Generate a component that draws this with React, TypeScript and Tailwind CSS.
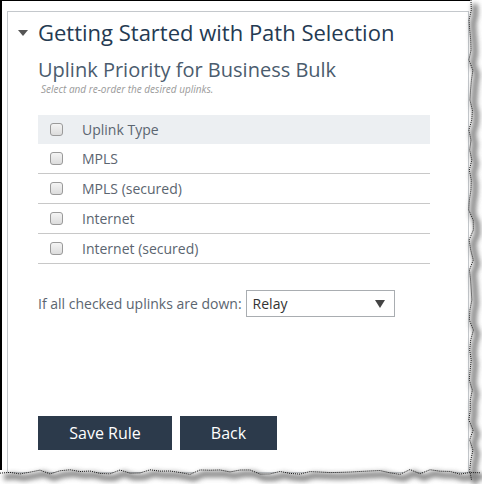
import { useState } from "react"

const uplinks = ["MPLS", "MPLS (secured)", "Internet", "Internet (secured)"]

function jagged(seedStart: number, count: number, step: number, amp: number) {
  // deterministic pseudo-random offsets for the torn paper edge
  const pts: number[] = []
  let s = seedStart
  for (let i = 0; i <= count; i++) {
    s = (s * 9301 + 49297) % 233280
    pts.push((s / 233280) * amp - amp / 2)
  }
  return pts.map((o, i) => [i * step, o] as const)
}

function TornEdges() {
  const right = jagged(7, 48, 10, 5)
  const bottom = jagged(13, 48, 10, 5)
  const rightPath = "M" + right.map(([y, o]) => `${471 + o} ${y}`).join(" L")
  const bottomPath = "M" + bottom.map(([x, o]) => `${x} ${472 + o}`).join(" L")
  const shift = (p: string) => p.replace(/(-?\d+\.?\d*) (-?\d+\.?\d*)/g, (_, a, b) => `${+a + 4} ${+b + 4}`)
  return (
    <svg className="pointer-events-none absolute inset-0" width="482" height="484" aria-hidden="true">
      <defs>
        <filter id="blur" x="-20%" y="-20%" width="140%" height="140%">
          <feGaussianBlur stdDeviation="2.5" />
        </filter>
      </defs>
      <path d={`${rightPath} L482 484 L482 0 Z`} fill="#ffffff" />
      <path d={`${bottomPath} L482 484 L0 484 Z`} fill="#ffffff" />
      <g filter="url(#blur)" opacity="0.8">
        <path d={shift(rightPath)} stroke="#666" strokeWidth="6" fill="none" />
        <path d={shift(bottomPath)} stroke="#666" strokeWidth="6" fill="none" />
      </g>
      <path d={rightPath} stroke="#111" strokeWidth="1" strokeDasharray="1 1" fill="none" />
      <path d={bottomPath} stroke="#111" strokeWidth="1" strokeDasharray="1 1" fill="none" />
    </svg>
  )
}

function Box() {
  return <span className="inline-block h-[13px] w-[13px] rounded-[3px] border border-[#9a9a9a] bg-gradient-to-b from-[#f4f4f4] to-[#dcdcdc]" />
}

export default function App() {
  const [relay] = useState("Relay")
  return (
    <div className="relative h-[484px] w-[482px] overflow-hidden bg-white font-['Open_Sans',sans-serif]">
      <div className="absolute left-0 top-0 h-[470px] w-[470px] border-l-2 border-t border-black" />
      <div className="absolute left-[7px] top-[11px] h-[462px] w-[462px] border border-[#c4c8cc]" />
      <div className="relative flex flex-col pl-[38px] pt-[17px]">
        <div className="relative flex items-center">
          <span className="absolute left-[-20px] top-[13px] h-0 w-0 border-x-[5px] border-t-[6px] border-x-transparent border-t-[#555]" />
          <h1 className="text-[22px] leading-[30px] text-[#243a52]">Getting Started with Path Selection</h1>
        </div>
        <h2 className="mt-[10px] text-[20px] leading-[26px] text-[#4b5c6e]">Uplink Priority for Business Bulk</h2>
        <p className="ml-[3px] mt-[1px] text-[10px] italic leading-[11px] text-[#9a9a9a]">Select and re-order the desired uplinks.</p>
        <div className="mt-[20px] w-[392px]">
          <div className="flex h-[29px] items-center bg-[#eceff2] pl-[12px]">
            <Box />
            <span className="ml-[19px] text-[14px] text-[#5b6570]">Uplink Type</span>
          </div>
          {uplinks.map((u) => (
            <div key={u} className="flex h-[30px] items-center border-b border-[#c8c8c8] pl-[12px]">
              <Box />
              <span className="ml-[19px] text-[14px] text-[#5b6570]">{u}</span>
            </div>
          ))}
        </div>
        <div className="mt-[26px] flex items-center">
          <span className="text-[14px] text-[#5b6570]">If all checked uplinks are down:</span>
          <div className="ml-[4px] flex h-[27px] w-[149px] items-center justify-between border border-[#a9adb1] pl-[6px] pr-[9px]">
            <span className="text-[14px] text-[#333]">{relay}</span>
            <span className="h-0 w-0 border-x-[5px] border-t-[8px] border-x-transparent border-t-[#444]" />
          </div>
        </div>
        <div className="mt-[99px] flex gap-[8px]">
          <button className="h-[34px] w-[134px] bg-[#2c3a4b] text-[16px] text-white">Save Rule</button>
          <button className="h-[34px] w-[97px] bg-[#2c3a4b] text-[16px] text-white">Back</button>
        </div>
      </div>
      <TornEdges />
    </div>
  )
}
